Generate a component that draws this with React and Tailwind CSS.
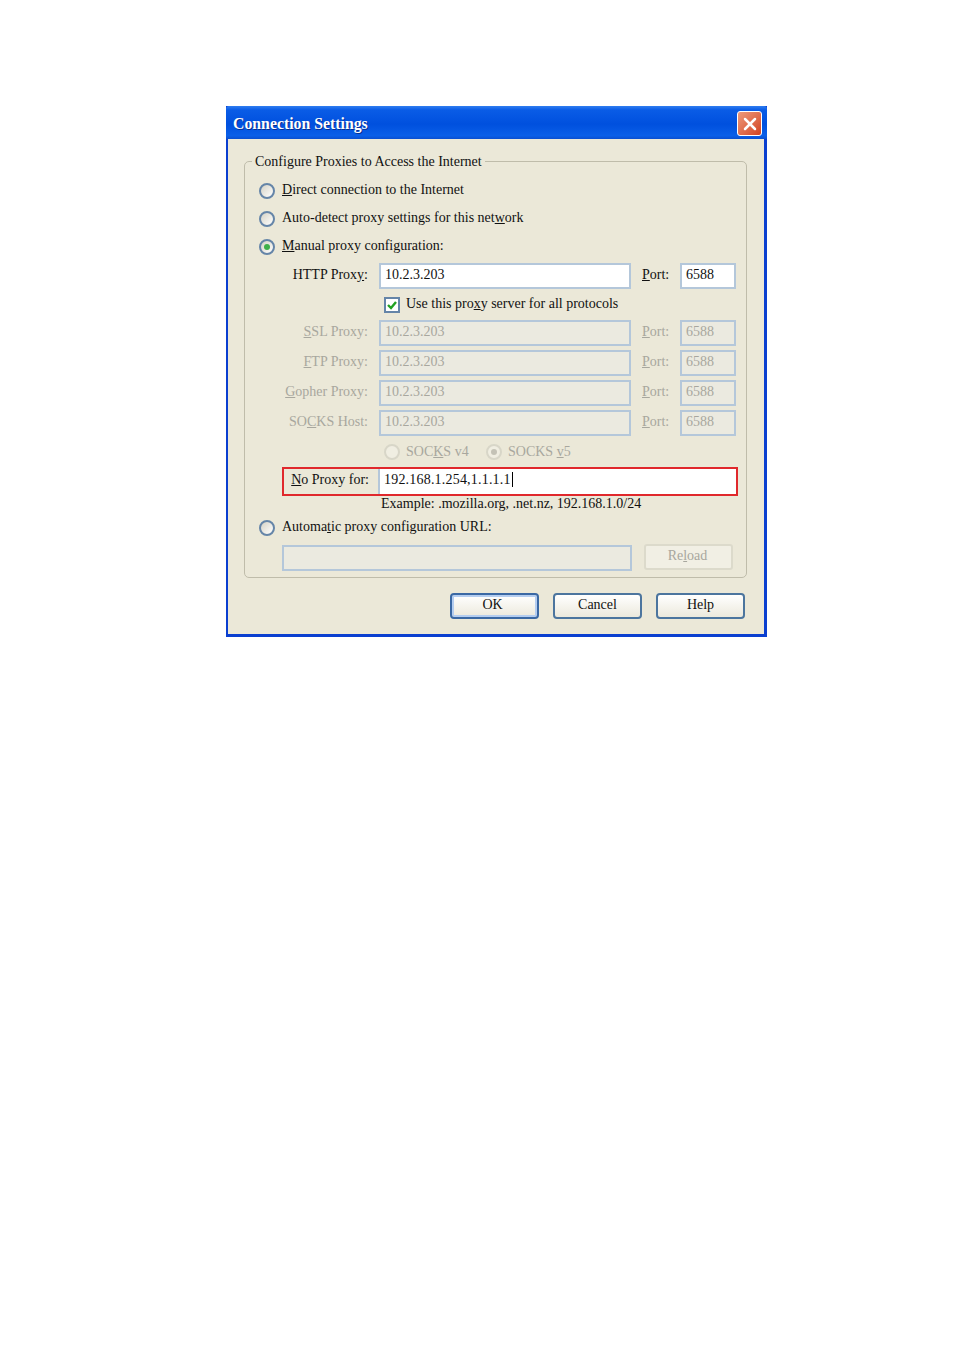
import { X } from "lucide-react";

const serif = "font-['Liberation_Serif','Times_New_Roman',serif]";

function Radio({ checked, disabled }) {
  return (
    <span
      className={`flex h-[16px] w-[16px] shrink-0 items-center justify-center rounded-full border-2 ${
        disabled
          ? "border-[#d8d6c8] bg-[#f0eee2]"
          : "border-[#6585a8] bg-gradient-to-br from-[#d6d3c6] to-white"
      }`}
    >
      {checked && (
        <span
          className={`h-[6px] w-[6px] rounded-full ${
            disabled ? "bg-[#c4c2b6]" : "bg-[#3fb04a]"
          }`}
        />
      )}
    </span>
  );
}

function Field({ value, disabled, width, children }) {
  return (
    <div
      className={`flex h-[26px] items-center border-2 border-[#b4c7da] pl-[4px] pb-[2px] ${width} ${
        disabled ? "bg-[#ebeae0] text-[#a8a79e]" : "bg-white text-[#111]"
      }`}
    >
      {value}
      {children}
    </div>
  );
}

function ProxyRow({ label, value, port, disabled }) {
  return (
    <div className={`flex h-[26px] items-center ${disabled ? "text-[#a8a79e]" : "text-[#111]"}`}>
      <div className="mr-[11px] w-[123px] pb-[2px] text-right">{label}</div>
      <Field value={value} disabled={disabled} width="w-[252px]" />
      <div className="ml-[11px] w-[38px] pb-[2px]">
        <u>P</u>ort:
      </div>
      <Field value={port} disabled={disabled} width="w-[56px]" />
    </div>
  );
}

function RadioRow({ checked, children }) {
  return (
    <div className="flex h-[28px] items-center gap-[7px] pl-[14px] text-[#111]">
      <Radio checked={checked} />
      <span className="pb-[2px]">{children}</span>
    </div>
  );
}

function DialogButton({ children, focused }) {
  return (
    <button
      className={`h-[26px] w-[89px] rounded-[4px] bg-gradient-to-b from-white to-[#ece9dc] pb-[2px] text-[#111] ${
        focused
          ? "border-2 border-[#3a68a4] pr-[4px] shadow-[inset_0_0_0_2px_#b4cdf0]"
          : "border-2 border-[#4c759e]"
      }`}
    >
      {children}
    </button>
  );
}

export default function App() {
  return (
    <div className={`min-h-[1350px] bg-white pt-[106px] pl-[226px] text-[14px] leading-none ${serif}`}>
      <div className="h-[531px] w-[541px] bg-[#0a3fd0]">
        {/* Title bar */}
        <div className="flex h-[33px] items-center justify-between rounded-t-[3px] bg-[linear-gradient(180deg,#2f7df0_0%,#0a5ce6_12%,#0050de_55%,#0a5fe8_90%,#0a4fd0_100%)] pt-[2px] pr-[5px] pl-[7px]">
          <span className="pt-[1px] text-[15.8px] font-bold text-white [text-shadow:1px_1px_0_#0a2f90]">
            Connection Settings
          </span>
          <div className="flex h-[25px] w-[25px] items-center justify-center rounded-[3px] border border-white bg-gradient-to-br from-[#ec9a7c] to-[#d2401c]">
            <X size={20} strokeWidth={3} color="white" />
          </div>
        </div>

        {/* Client area */}
        <div className="mr-[3px] ml-[2px] h-[495px] bg-[#ebe8d8] px-[16px] pt-[14px]">
          <fieldset className="h-[425px] w-[503px] rounded-[5px] border border-[#bfbcaa]">
            <legend className="ml-[7px] h-[16px] px-[3px] pt-[2px] text-[#111]">
              Configure Proxies to Access the Internet
            </legend>
            <div className="pt-[8px]">
              <RadioRow>
                <u>D</u>irect connection to the Internet
              </RadioRow>
              <RadioRow>
                Auto-detect proxy settings for this net<u>w</u>ork
              </RadioRow>
              <RadioRow checked>
                <u>M</u>anual proxy configuration:
              </RadioRow>

              <div className="mt-[2px]">
                <ProxyRow
                  label={
                    <>
                      HTTP Prox<u>y</u>:
                    </>
                  }
                  value="10.2.3.203"
                  port="6588"
                />
              </div>

              <div className="flex h-[31px] items-center gap-[6px] pl-[139px] text-[#111]">
                <span className="flex h-[16px] w-[16px] items-center justify-center border-2 border-[#6585a8] bg-white">
                  <svg viewBox="0 0 12 12" className="h-[12px] w-[12px]">
                    <path d="M2 6 L5 9 L10 3" fill="none" stroke="#21a121" strokeWidth="2.4" />
                  </svg>
                </span>
                <span className="pb-[1px]">
                  Use this pro<u>x</u>y server for all protocols
                </span>
              </div>

              <div className="flex flex-col gap-[4px]">
                <ProxyRow disabled label={<><u>S</u>SL Proxy:</>} value="10.2.3.203" port="6588" />
                <ProxyRow disabled label={<><u>F</u>TP Proxy:</>} value="10.2.3.203" port="6588" />
                <ProxyRow disabled label={<><u>G</u>opher Proxy:</>} value="10.2.3.203" port="6588" />
                <ProxyRow disabled label={<>SO<u>C</u>KS Host:</>} value="10.2.3.203" port="6588" />
              </div>

              <div className="flex h-[31px] items-center pl-[139px] text-[#a8a79e]">
                <Radio disabled />
                <span className="ml-[6px] w-[80px]">
                  SOC<u>K</u>S v4
                </span>
                <Radio disabled checked />
                <span className="ml-[6px]">
                  SOCKS <u>v</u>5
                </span>
              </div>

              <div className="ml-[37px] flex h-[29px] w-[456px] items-center border-2 border-[#e0282c] text-[#111]">
                <div className="mr-[9px] w-[85px] pb-[4px] text-right">
                  <u>N</u>o Proxy for:
                </div>
                <div className="flex h-[25px] w-[358px] items-center border-l-2 border-[#b4c7da] bg-white pb-[4px] pl-[4px] tracking-[0.2px]">
                  192.168.1.254,1.1.1.1
                  <span className="ml-[1px] h-[15px] w-px bg-black" />
                </div>
              </div>

              <div className="mt-[1px] h-[15px] pl-[136px] text-[#111]">
                Example: .mozilla.org, .net.nz, 192.168.1.0/24
              </div>

              <div className="mt-[2px]">
                <RadioRow>
                  Automa<u>t</u>ic proxy configuration URL:
                </RadioRow>
              </div>

              <div className="mt-[3px] flex items-start pl-[37px]">
                <div className="h-[26px] w-[350px] border-2 border-[#b4c7da] bg-[#ebeae0]" />
                <button className="-mt-[1px] ml-[12px] h-[26px] w-[89px] rounded-[3px] border-2 border-[#dcdacb] bg-[#f1efe4] pb-[2px] pr-[2px] text-[#a8a79e]">
                  Re<u>l</u>oad
                </button>
              </div>
            </div>
          </fieldset>

          <div className="mt-[15px] flex w-[503px] justify-end gap-[14px] pr-[2px]">
            <DialogButton focused>OK</DialogButton>
            <DialogButton>Cancel</DialogButton>
            <DialogButton>Help</DialogButton>
          </div>
        </div>
      </div>
    </div>
  );
}
